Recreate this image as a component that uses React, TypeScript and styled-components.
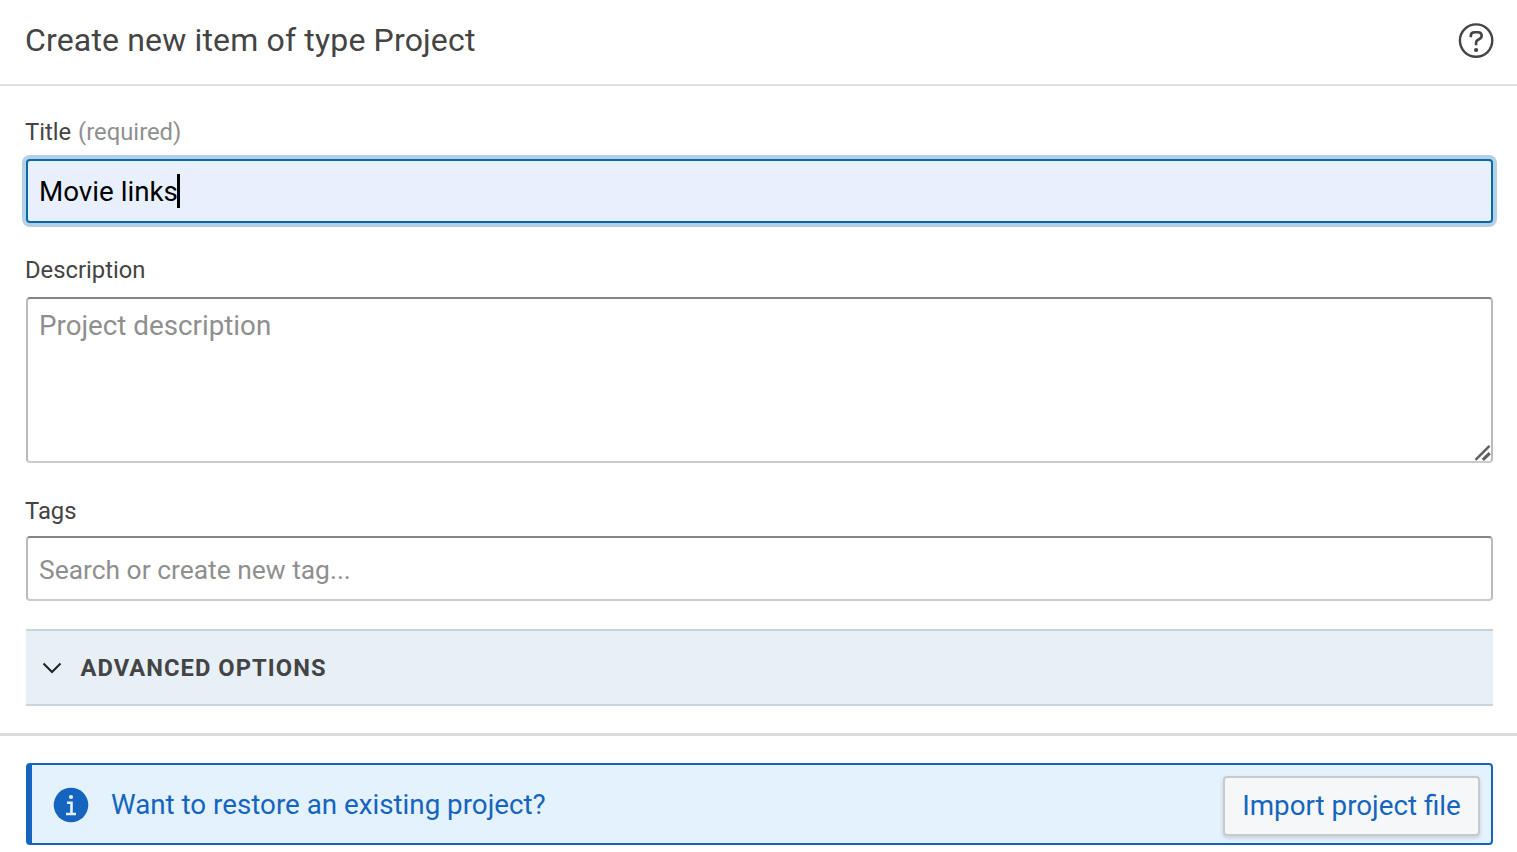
import React from 'react';
import styled, { createGlobalStyle } from 'styled-components';

const GlobalStyle = createGlobalStyle`
  *, *::before, *::after { box-sizing: border-box; }
  html, body { margin: 0; background: #fff; }
  body { font-family: Roboto, "Liberation Sans", sans-serif; color: #444; overflow: hidden; }
`;

const Dialog = styled.main`
  display: flex;
  flex-direction: column;
  height: 852px;
  background: #fff;
`;

const Header = styled.header`
  display: flex;
  align-items: center;
  justify-content: space-between;
  height: 86px;
  padding: 0 23px 4px 25px;
  border-bottom: 2px solid #e0e0e0;
`;

const Heading = styled.h1`
  margin: 0;
  font-size: 32px;
  font-weight: 400;
  line-height: 40px;
  letter-spacing: 0.16px;
  white-space: nowrap;
`;

const HelpButton = styled.button`
  display: flex;
  padding: 0;
  border: 0;
  background: none;
  color: #444;
`;

const Form = styled.section`
  display: flex;
  flex-direction: column;
  height: 647px;
  padding: 30px 24px 0 26px;
`;

const Label = styled.div`
  height: 32px;
  margin-left: -1px;
  font-size: 23.8px;
  line-height: 32px;
  white-space: pre;
`;

const Hint = styled.span`
  margin-left: 1px;
  color: #8f8f8f;
`;

const Field = styled.div<{ $height: number; $top: number; $bottom: number }>`
  position: relative;
  display: flex;
  flex: none;
  height: ${(p) => p.$height}px;
  margin-top: ${(p) => p.$top}px;
  margin-bottom: ${(p) => p.$bottom}px;
  padding: 11px 11px 0;
  border: 2px solid #bcbcbc;
  border-top-color: #868686;
  border-bottom-color: #cbcbcb;
  border-radius: 4px;
  font-size: 27.75px;
  line-height: 34px;
  color: #8f8f8f;
  white-space: nowrap;
`;

const FocusedField = styled(Field)`
  padding-top: 14px;
  border-color: #0a67a8;
  background: #e8f0fe;
  color: #000;
  box-shadow: 0 0 0 4px #b4d0e4;
`;

const DescriptionField = styled(Field)`
  padding-top: 10px;
`;

const TagField = styled(Field)`
  padding-top: 15px;
  font-size: 26.4px;
`;

const Caret = styled.span`
  width: 3px;
  height: 34px;
  margin: -1px 0 0 -1px;
  background: #000;
`;

const ResizeGrip = styled.svg`
  position: absolute;
  right: -1px;
  bottom: 0;
`;

const Accordion = styled.div`
  display: flex;
  align-items: center;
  gap: 18.5px;
  height: 77px;
  padding-left: 16px;
  border-top: 2px solid #c6d3de;
  border-bottom: 2px solid #cbd5de;
  background: #e7eff7;
  color: #444;
  font-size: 23.7px;
  font-weight: 700;
  letter-spacing: 1.05px;
`;

const Footer = styled.footer`
  flex: 1;
  padding: 27px 24px 0 26px;
  border-top: 3px solid #dcdcdc;
`;

const Notice = styled.div`
  display: flex;
  align-items: center;
  height: 82px;
  padding: 2px 11px 0 21px;
  border: 2px solid #1565c0;
  border-left-width: 6px;
  border-radius: 4px;
  background: #e3f2fd;
  color: #1565c0;
  font-size: 27.75px;
`;

const NoticeText = styled.span`
  flex: 1;
  margin-left: 22px;
  line-height: 34px;
  white-space: nowrap;
`;

const ImportButton = styled.button`
  width: 257px;
  height: 60px;
  margin-top: 2px;
  padding: 0;
  border: 2px solid #c8cacc;
  border-radius: 4px;
  background: #f5f7f9;
  box-shadow: 0 2px 4px rgba(0, 0, 0, 0.14);
  color: #1565c0;
  font: 400 27.75px/34px Roboto, "Liberation Sans", sans-serif;
  white-space: nowrap;
`;

export default function App() {
  return (
    <>
      <GlobalStyle />
      <Dialog>
        <Header>
          <Heading>Create new item of type Project</Heading>
          <HelpButton aria-label="Help">
            <svg width="36" height="37" viewBox="0 0 36 37" fill="none">
              <circle cx="18.1" cy="18.6" r="16.2" stroke="currentColor" strokeWidth="2.4" />
              <path d="M12.8 15.3V13.9Q12.8 10.2 16.6 10.2H19.8Q23.7 10.2 23.7 13.8Q23.7 16 21 17.2Q18.1 18.5 18.1 20.5V23.3" stroke="currentColor" strokeWidth="2.6" />
              <circle cx="18.1" cy="28" r="2.1" fill="currentColor" />
            </svg>
          </HelpButton>
        </Header>
        <Form>
          <Label>Title <Hint>(required)</Hint></Label>
          <FocusedField $height={64} $top={11} $bottom={31}>
            Movie links<Caret />
          </FocusedField>
          <Label>Description</Label>
          <DescriptionField $height={166} $top={11} $bottom={32}>
            Project description
            <ResizeGrip width="18" height="18" viewBox="0 0 18 18" fill="none" stroke="#606060">
              <path d="M1.5 16.8L15.5 2.8" strokeWidth="2.4" />
              <path d="M8.8 16.8L15.8 10.2" strokeWidth="3.2" />
            </ResizeGrip>
          </DescriptionField>
          <Label>Tags</Label>
          <TagField $height={65} $top={9} $bottom={28}>Search or create new tag...</TagField>
          <Accordion>
            <svg width="20" height="12" viewBox="0 0 20 12" fill="none" stroke="#222" strokeWidth="2">
              <path d="M1.5 1.5L10 10L18.5 1.5" />
            </svg>
            ADVANCED OPTIONS
          </Accordion>
        </Form>
        <Footer>
          <Notice>
            <svg width="36" height="36" viewBox="0 0 36 36">
              <circle cx="18" cy="18" r="17.3" fill="#1565c0" />
              <circle cx="18" cy="10" r="2.1" fill="#e3f2fd" />
              <path d="M14 15.8H18.5V26.8M13 27H23" fill="none" stroke="#e3f2fd" strokeWidth="2.6" />
            </svg>
            <NoticeText>Want to restore an existing project?</NoticeText>
            <ImportButton>Import project file</ImportButton>
          </Notice>
        </Footer>
      </Dialog>
    </>
  );
}
